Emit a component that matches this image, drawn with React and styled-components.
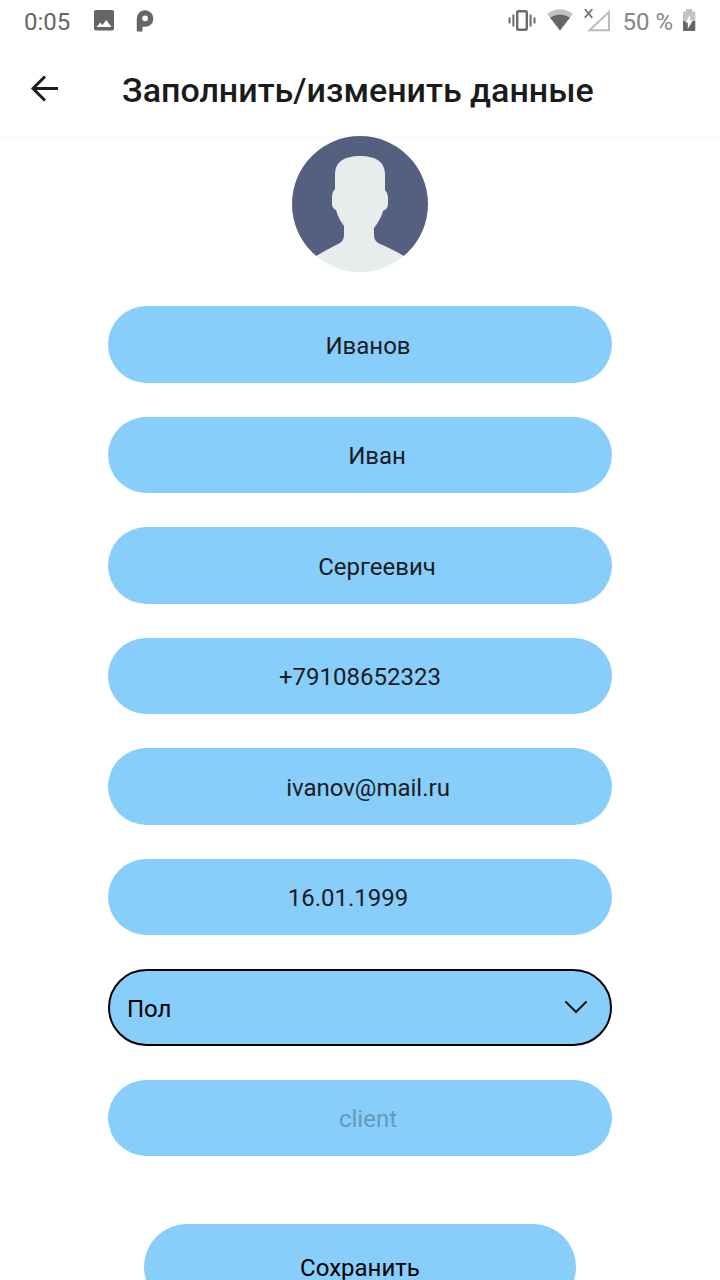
import React from 'react';
import styled, { createGlobalStyle } from 'styled-components';

const GlobalStyle = createGlobalStyle`
  * { box-sizing: border-box; }
  body {
    margin: 0;
    background: #fff;
    color: #1c1b1f;
    font-family: Roboto, 'Liberation Sans', sans-serif;
  }
`;

const Screen = styled.div`
  display: flex;
  flex-direction: column;
  height: 100vh;
`;

const StatusBar = styled.div`
  display: flex;
  flex: none;
  align-items: center;
  justify-content: space-between;
  height: 44px;
  padding: 0 24px;
  color: #666;
  font-size: 24px;
  line-height: 28px;
`;

const StatusGroup = styled.div`
  display: flex;
  align-items: center;
  gap: ${(p) => p.$gap}px;
`;

const Charge = styled.span`
  color: #868686;
`;

const Header = styled.header`
  display: flex;
  flex: none;
  align-items: center;
  gap: 48px;
  height: 93px;
  padding: 0 16px;
  border-bottom: 1px solid #f9f9f9;
`;

const BackButton = styled.button`
  display: grid;
  place-items: center;
  width: 58px;
  height: 58px;
  padding: 0;
  border: 0;
  border-radius: 50%;
  background: none;
  color: #1c1b1f;
  cursor: pointer;
`;

const Title = styled.h1`
  margin: 0;
  color: #1b1b1c;
  font-size: 34px;
  font-weight: 500;
  line-height: 40px;
`;

const Content = styled.main`
  flex: 1;
  min-height: 0;
  margin-top: -1px;
  overflow-y: auto;
  scrollbar-width: none;
`;

const Form = styled.form`
  display: flex;
  flex-direction: column;
  align-items: center;
  padding-bottom: 34px;
`;

const Avatar = styled.svg`
  width: 136px;
  height: 136px;
  border-radius: 50%;
`;

const Fields = styled.div`
  display: grid;
  grid-auto-rows: 1fr;
  gap: 34px;
  width: 70%;
  min-height: 850px;
  margin-top: 34px;
`;

const Field = styled.input`
  width: 100%;
  height: 100%;
  padding: 3px ${(p) => p.$end || 0}px 0 ${(p) => p.$start || 0}px;
  border: 0;
  border-radius: 40px;
  background: #87cefa;
  color: #1c1b1f;
  font: 24px/28px Roboto, 'Liberation Sans', sans-serif;
  text-align: center;

  &:disabled {
    color: #659bbc;
  }
`;

const SelectBox = styled.div`
  display: grid;
  align-items: center;

  & > * {
    grid-area: 1 / 1;
  }
`;

const Select = styled.select`
  appearance: none;
  width: 100%;
  height: 100%;
  padding: 3px 56px 0 17px;
  border: 2px solid #000;
  border-radius: 40px;
  background: #87cefa;
  color: #000;
  font: 24px/28px Roboto, 'Liberation Sans', sans-serif;
`;

const Chevron = styled.svg`
  justify-self: end;
  margin-right: 24px;
  pointer-events: none;
`;

const SaveButton = styled.button`
  width: 60%;
  height: 86px;
  margin-top: 68px;
  padding: 2px 0 0;
  border: 0;
  border-radius: 43px;
  background: #87cefa;
  color: #000;
  font: 24px/28px Roboto, 'Liberation Sans', sans-serif;
  cursor: pointer;
`;

const fields = [
  { name: 'surname', label: 'Фамилия', value: 'Иванов', start: 16 },
  { name: 'firstName', label: 'Имя', value: 'Иван', start: 34 },
  { name: 'patronymic', label: 'Отчество', value: 'Сергеевич', start: 34 },
  { name: 'phone', label: 'Телефон', value: '+79108652323', type: 'tel' },
  { name: 'email', label: 'Почта', value: 'ivanov@mail.ru', start: 16 },
  { name: 'birthday', label: 'Дата рождения', value: '16.01.1999', end: 24 },
];

export default function App() {
  return (
    <Screen>
      <GlobalStyle />
      <StatusBar>
        <StatusGroup $gap={24}>
          <time>0:05</time>
          <StatusGroup $gap={22}>
            <svg width="20" height="24" viewBox="0 0 20 24" aria-hidden="true">
              <path
                fill="#666"
                fillRule="evenodd"
                d="M2 0h16a2 2 0 0 1 2 2v16.500a2 2 0 0 1-2 2H2a2 2 0 0 1-2-2V2a2 2 0 0 1 2-2zm.5 17h15l-5.200-7-4 5-2-2.500z"
              />
            </svg>
            <svg width="18" height="24" viewBox="0 0 18 24" aria-hidden="true">
              <path
                fill="#666"
                fillRule="evenodd"
                d="M.8 21.500V8.400a8.300 8.300 0 1 1 8.300 8.400H6.500v4.700zM9.100 5.400a2.900 2.900 0 1 0 0 5.800 2.900 2.900 0 0 0 0-5.800z"
              />
            </svg>
          </StatusGroup>
        </StatusGroup>
        <StatusGroup $gap={10}>
          <svg width="28" height="26" viewBox="0 0 28 26" fill="none" stroke="#6b6b6b" strokeWidth="2" aria-hidden="true">
            <rect x="9.200" y="2.200" width="9.600" height="18.600" rx="1.500" strokeWidth="2.400" />
            <path d="M5.400 5.500v12M22.600 5.500v12M1.500 8.500v6M26.500 8.500v6" />
          </svg>
          <svg width="28" height="26" viewBox="0 0 28 26" aria-hidden="true">
            <path fill="#c2c2c2" d="M14 21.500 1 4.800Q14-4.500 27 4.800z" />
            <path fill="#666" d="M14 21.500 4 8.500Q14 2.500 24 8.500z" />
          </svg>
          <svg width="28" height="26" viewBox="0 0 28 26" fill="none" aria-hidden="true">
            <path stroke="#777" strokeWidth="1.800" d="m.8 0 7.500 8.800m0-8.800-7.500 8.800" />
            <path stroke="#bbb" strokeWidth="2" d="M5.500 21.200 25 3v18.200z" />
          </svg>
          <StatusGroup $gap={9}>
            <Charge>50 %</Charge>
            <svg width="14" height="26" viewBox="0 0 14 26" aria-hidden="true">
              <path fill="#c2c2c2" d="M4 0h6v2.500h3.300v9.500H1V2.500h3z" />
              <path fill="#666" d="M1 12h12.300v9a1 1 0 0 1-1 1H2a1 1 0 0 1-1-1z" />
              <path fill="#fff" d="M8.200 6v5.500h2.600L5.800 20v-6.500H3.200z" />
            </svg>
          </StatusGroup>
        </StatusGroup>
      </StatusBar>
      <Header>
        <BackButton type="button" aria-label="Назад">
          <svg
            width="30"
            height="30"
            viewBox="0 0 30 30"
            fill="none"
            stroke="currentColor"
            strokeWidth="3"
            aria-hidden="true"
          >
            <path d="M28 13.500H3M15 1.500l-12 12 12 12" />
          </svg>
        </BackButton>
        <Title>Заполнить/изменить данные</Title>
      </Header>
      <Content>
        <Form onSubmit={(e) => e.preventDefault()}>
          <Avatar viewBox="0 0 136 136" role="img" aria-label="Фото профиля">
            <path fill="#556080" d="M0 0h136v120H0z" />
            <path
              fill="#e7eced"
              d="M43 38c0-12 9-18 25-18s25 6 25 18v16q3 3 3 7v7q0 5-5 7-2 8-9 17v7q0 6 5 8.500 15 6.500 25 12.500v20H24v-20q10-6 23-12.500 5-2.500 5-8.500v-9q-6-8-8-16-4-2-4-6v-8q0-4 3-7z"
            />
          </Avatar>
          <Fields>
            {fields.map((f) => (
              <Field
                key={f.name}
                name={f.name}
                type={f.type || 'text'}
                aria-label={f.label}
                defaultValue={f.value}
                $start={f.start}
                $end={f.end}
              />
            ))}
            <SelectBox>
              <Select name="gender" aria-label="Пол" defaultValue="">
                <option value="">Пол</option>
                <option value="m">Мужской</option>
                <option value="f">Женский</option>
              </Select>
              <Chevron
                width="24"
                height="14"
                viewBox="0 0 24 14"
                fill="none"
                stroke="#111"
                strokeWidth="2"
                strokeLinecap="round"
                aria-hidden="true"
              >
                <path d="m2 2 10 10L22 2" />
              </Chevron>
            </SelectBox>
            <Field name="role" type="text" aria-label="Роль" defaultValue="client" disabled $start={16} />
          </Fields>
          <SaveButton type="submit">Сохранить</SaveButton>
        </Form>
      </Content>
    </Screen>
  );
}
